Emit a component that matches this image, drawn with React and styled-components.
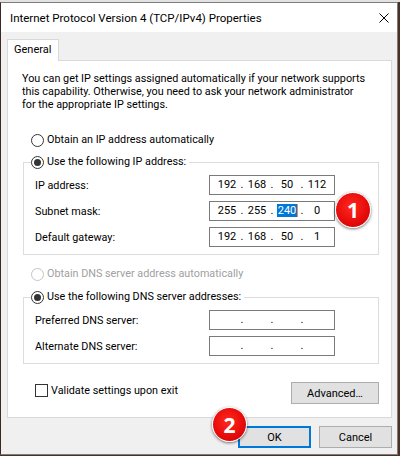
import React from "react";
import styled, { createGlobalStyle } from "styled-components";

const FONT = `Roboto, "Liberation Sans", sans-serif`;

const Global = createGlobalStyle`
  html, body { margin: 0; padding: 0; background: #4a3026; }
  body { font-family: ${FONT}; font-size: 10.8px; color: #000; }
  * { box-sizing: border-box; }
`;

const Screen = styled.div`
  width: 400px;
  height: 456px;
  background: #4a3026;
  border-top: 2px solid #e2e2e2;
  overflow: hidden;
`;

const Window = styled.div`
  width: 398px;
  height: 453px;
  border: 1px solid #7d7d7d;
  border-left-color: #3c2a22;
  background: #f0f0f0;
  display: flex;
  flex-direction: column;
  white-space: nowrap;
`;

const TitleBar = styled.div`
  height: 29px;
  background: #fff;
  display: flex;
  align-items: center;
  justify-content: space-between;
  padding: 0 8px 0 9px;
`;

const Title = styled.span`
  font-size: 11.5px;
  color: #000;
`;

const CloseIcon = styled.svg`
  width: 10px;
  height: 10px;
`;

const Body = styled.div`
  flex: 1;
  display: flex;
  flex-direction: column;
  padding: 7px 5px 0 6px;
`;

const TabStrip = styled.div`
  display: flex;
  position: relative;
  z-index: 1;
  margin-bottom: -1px;
`;

const Tab = styled.div`
  height: 22px;
  width: 52px;
  background: #fff;
  border: 1px solid #d9d9d9;
  border-bottom: none;
  padding: 2px 0 0 6px;
  line-height: 16px;
  font-size: 11px;
`;

const Panel = styled.div`
  height: 358px;
  background: #fff;
  border: 1px solid #d9d9d9;
  display: flex;
  flex-direction: column;
`;

const Intro = styled.p`
  margin: 11px 0 0 14px;
  line-height: 13px;
`;

const RadioRow = styled.label`
  display: flex;
  align-items: center;
  gap: 3px;
  height: 16px;
  line-height: 16px;
  margin: ${(p) => p.$mt || 0}px 0 0 23px;
  color: ${(p) => (p.$disabled ? "#a0a0a0" : "#000")};
`;

const RadioCircle = styled.span`
  width: 13px;
  height: 13px;
  border-radius: 50%;
  border: 1px solid ${(p) => (p.$disabled ? "#c4c4c4" : "#333")};
  background: #fff;
  display: inline-flex;
  align-items: center;
  justify-content: center;
  flex: none;
  &::after {
    content: "";
    width: 7px;
    height: 7px;
    border-radius: 50%;
    background: #333;
    display: ${(p) => (p.$checked ? "block" : "none")};
  }
`;

const Group = styled.fieldset`
  margin: ${(p) => p.$mt}px 12px 0 15px;
  padding: 0;
  border: 1px solid #dcdcdc;
  min-width: 0;
`;

const Legend = styled.legend`
  margin-left: 7px;
  padding: 0 3px 0 0;
  height: 16px;
  line-height: 16px;
  display: flex;
  align-items: center;
  gap: 3px;
`;

const GroupBody = styled.div`
  padding: 5px 0 7px 11px;
  display: flex;
  flex-direction: column;
  gap: 6px;
`;

const FieldRow = styled.div`
  position: relative;
  display: grid;
  grid-template-columns: 174px 126px;
  align-items: center;
  height: 20px;
`;

const IpBox = styled.div`
  width: 126px;
  height: 20px;
  border: 1px solid #7a7a7a;
  background: #fff;
  display: grid;
  grid-template-columns: 24px 6px 24px 6px 24px 6px 24px;
  padding-left: 5px;
  align-items: center;
  line-height: 16px;
  font-size: 11px;
  color: #000;
`;

const Cell = styled.span`
  text-align: center;
  color: #000;
`;

const Selected = styled.span`
  display: inline-block;
  background: #0078d7;
  color: #fff;
  line-height: 13px;
  height: 13px;
  padding: 0 1px;
  position: relative;
  &::after {
    content: "";
    position: absolute;
    right: -1px;
    top: 0;
    width: 1px;
    height: 13px;
    background: #ff8728;
  }
`;

const BottomRow = styled.div`
  display: flex;
  justify-content: space-between;
  align-items: flex-start;
  margin: 18px 12px 0 27px;
`;

const CheckRow = styled.label`
  display: flex;
  align-items: center;
  gap: 3px;
  height: 16px;
`;

const CheckBox = styled.span`
  width: 13px;
  height: 13px;
  border: 1px solid #333;
  background: #fff;
  flex: none;
`;

const Button = styled.button`
  width: ${(p) => p.$w || 73}px;
  height: 22px;
  background: #e1e1e1;
  border: ${(p) => (p.$default ? "2px solid #0078d7" : "1px solid #adadad")};
  font-family: ${FONT};
  font-size: 11px;
  color: #000;
  padding: 0;
`;

const ButtonRow = styled.div`
  position: relative;
  display: flex;
  justify-content: flex-end;
  gap: 8px;
  margin-top: 8px;
`;

const Badge = styled.div`
  position: absolute;
  left: ${(p) => p.$x}px;
  top: ${(p) => p.$y}px;
  width: ${(p) => p.$d}px;
  height: ${(p) => p.$d}px;
  border-radius: 50%;
  background: radial-gradient(circle at 45% 40%, #ff2a20 0%, #e80c0c 55%, #c60000 100%);
  border: 1.5px solid #fff;
  box-shadow: 0 1px 3px rgba(0, 0, 0, 0.55);
  color: #fff;
  font-family: "Noto Sans", sans-serif;
  font-weight: 700;
  font-size: 21px;
  display: flex;
  align-items: center;
  justify-content: center;
  z-index: 3;
`;

const Ip = ({ parts, sel }) => (
  <IpBox>
    {[0, 1, 2, 3].map((i) => (
      <React.Fragment key={i}>
        <Cell>{sel === i ? <Selected>{parts[i]}</Selected> : parts[i]}</Cell>
        {i < 3 && <Cell>.</Cell>}
      </React.Fragment>
    ))}
  </IpBox>
);

export default function App() {
  return (
    <>
      <Global />
      <Screen>
        <Window>
          <TitleBar>
            <Title>Internet Protocol Version 4 (TCP/IPv4) Properties</Title>
            <CloseIcon viewBox="0 0 10 10">
              <path d="M0.5 0.5 L9.5 9.5 M9.5 0.5 L0.5 9.5" stroke="#000" strokeWidth="1" fill="none" />
            </CloseIcon>
          </TitleBar>
          <Body>
            <TabStrip>
              <Tab>General</Tab>
            </TabStrip>
            <Panel>
              <Intro>
                You can get IP settings assigned automatically if your network supports
                <br />
                this capability. Otherwise, you need to ask your network administrator
                <br />
                for the appropriate IP settings.
              </Intro>
              <RadioRow $mt={21}>
                <RadioCircle />
                Obtain an IP address automatically
              </RadioRow>
              <Group $mt={6}>
                <Legend>
                  <RadioCircle $checked />
                  Use the following IP address:
                </Legend>
                <GroupBody>
                  <FieldRow>
                    <span>IP address:</span>
                    <Ip parts={["192", "168", "50", "112"]} />
                  </FieldRow>
                  <FieldRow>
                    <span>Subnet mask:</span>
                    <Ip parts={["255", "255", "240", "0"]} sel={2} />
                    <Badge $x={300} $y={-9} $d={36}>1</Badge>
                  </FieldRow>
                  <FieldRow>
                    <span>Default gateway:</span>
                    <Ip parts={["192", "168", "50", "1"]} />
                  </FieldRow>
                </GroupBody>
              </Group>
              <RadioRow $mt={11} $disabled>
                <RadioCircle $disabled />
                Obtain DNS server address automatically
              </RadioRow>
              <Group $mt={7}>
                <Legend>
                  <RadioCircle $checked />
                  Use the following DNS server addresses:
                </Legend>
                <GroupBody>
                  <FieldRow>
                    <span>Preferred DNS server:</span>
                    <Ip parts={["", "", "", ""]} />
                  </FieldRow>
                  <FieldRow>
                    <span>Alternate DNS server:</span>
                    <Ip parts={["", "", "", ""]} />
                  </FieldRow>
                </GroupBody>
              </Group>
              <BottomRow>
                <CheckRow>
                  <CheckBox />
                  Validate settings upon exit
                </CheckRow>
                <Button $w={88}>Advanced…</Button>
              </BottomRow>
            </Panel>
            <ButtonRow>
              <Button $default>OK</Button>
              <Button>Cancel</Button>
              <Badge $x={205} $y={-19} $d={35}>2</Badge>
            </ButtonRow>
          </Body>
        </Window>
      </Screen>
    </>
  );
}
